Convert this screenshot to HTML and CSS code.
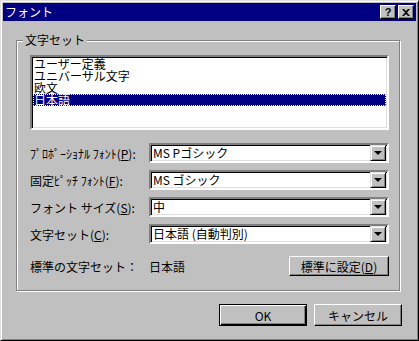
FILE: index.html
```html
<!DOCTYPE html>
<html lang="ja">
<head>
  <meta charset="UTF-8" />
  <title>フォント</title>
  <link rel="stylesheet" href="styles.css">
</head>
<body>
  <div class="window">
    <!-- Title bar -->
    <div class="titlebar">
      <span class="title">フォント</span>
      <span class="tbtn help">?</span>
      <span class="tbtn close">
        <svg width="8" height="7" viewBox="0 0 8 7"><path d="M0 0h2l2 2 2-2h2L5 3.5 8 7H6L4 5 2 7H0l3-3.5z" fill="#000"/></svg>
      </span>
    </div>

    <div class="content">
      <!-- Character set group -->
      <div class="group">
        <span class="group-label">文字セット</span>
        <ul class="listbox">
          <li>ユーザー定義</li>
          <li>ユニバーサル文字</li>
          <li>欧文</li>
          <li class="selected">日本語</li>
        </ul>

        <div class="row">
          <label class="label">ﾌﾟﾛﾎﾟｰｼｮﾅﾙ ﾌｫﾝﾄ(<u>P</u>):</label>
          <div class="combo"><span class="combo-text">MS Pゴシック</span><span class="drop"></span></div>
        </div>
        <div class="row">
          <label class="label">固定ﾋﾟｯﾁ ﾌｫﾝﾄ(<u>F</u>):</label>
          <div class="combo"><span class="combo-text">MS ゴシック</span><span class="drop"></span></div>
        </div>
        <div class="row">
          <label class="label">フォント サイズ(<u>S</u>):</label>
          <div class="combo"><span class="combo-text">中</span><span class="drop"></span></div>
        </div>
        <div class="row">
          <label class="label">文字セット(<u>C</u>):</label>
          <div class="combo"><span class="combo-text">日本語 (自動判別)</span><span class="drop"></span></div>
        </div>

        <div class="row default-row">
          <span class="label">標準の文字セット：</span>
          <span class="value">日本語</span>
          <button class="btn set-default">標準に設定(<u>D</u>)</button>
        </div>
      </div>

      <!-- Dialog buttons -->
      <div class="actions">
        <button class="btn dialog-btn default">OK</button>
        <button class="btn dialog-btn">キャンセル</button>
      </div>
    </div>
  </div>
</body>
</html>
```

FILE: styles.css
```css
body {
  margin: 0;
  padding: 0;
  font-family: "Noto Sans CJK JP", "Noto Sans", sans-serif;
  font-size: 12px;
  color: #000;
}
.window {
  width: 419px;
  height: 341px;
  box-sizing: border-box;
  background: #c0c0c0;
  border: 1px solid;
  border-color: #dfdfdf #000 #000 #dfdfdf;
  box-shadow: inset 1px 1px #fff, inset -1px -1px #808080;
  padding: 2px;
}
.titlebar {
  height: 18px;
  background: #000080;
  color: #fff;
  display: flex;
  align-items: center;
  padding: 0 2px;
}
.title {
  flex: 1;
  line-height: 18px;
}
.tbtn {
  width: 16px;
  height: 14px;
  box-sizing: border-box;
  background: #c0c0c0;
  border: 1px solid;
  border-color: #fff #000 #000 #fff;
  box-shadow: inset -1px -1px #808080;
  color: #000;
  font-family: "Liberation Sans", sans-serif;
  font-weight: bold;
  font-size: 11px;
  line-height: 12px;
  text-align: center;
  display: flex;
  align-items: center;
  justify-content: center;
}
.tbtn.close {
  margin-left: 2px;
}
.content {
  padding: 0 14px 0 13px;
}
.group {
  position: relative;
  margin-top: 19px;
  width: 384px;
  height: 251px;
  box-sizing: border-box;
  border: 1px solid #808080;
  box-shadow: inset 1px 1px #fff, 1px 1px #fff;
  padding: 14px 10px 0 13px;
}
.group-label {
  position: absolute;
  top: -9px;
  left: 6px;
  padding: 0 2px;
  background: #c0c0c0;
  line-height: 16px;
}
.listbox {
  list-style: none;
  margin: 0;
  padding: 1px 0 0;
  height: 75px;
  box-sizing: border-box;
  background: #fff;
  border: 2px solid;
  border-color: #808080 #fff #fff #808080;
  box-shadow: inset 1px 1px #000, inset -1px -1px #dfdfdf;
}
.listbox li {
  height: 12px;
  line-height: 12px;
  padding-left: 1px;
  margin: 0 1px;
}
.listbox li.selected {
  background: #000080;
  color: #fff;
  outline: 1px dotted #ffffa0;
  outline-offset: -1px;
}
.row {
  display: flex;
  align-items: center;
  margin-top: 7px;
}
.listbox + .row {
  margin-top: 13px;
}
.label {
  width: 119px;
  flex-shrink: 0;
  white-space: nowrap;
}
.combo {
  flex: 1;
  height: 20px;
  box-sizing: border-box;
  background: #fff;
  border: 2px solid;
  border-color: #808080 #fff #fff #808080;
  box-shadow: inset 1px 1px #000, inset -1px -1px #dfdfdf;
  display: flex;
  align-items: center;
  padding: 0 1px 0 2px;
}
.combo-text {
  flex: 1;
  line-height: 16px;
}
.drop {
  position: relative;
  width: 16px;
  height: 16px;
  box-sizing: border-box;
  background: #c0c0c0;
  border: 1px solid;
  border-color: #dfdfdf #000 #000 #dfdfdf;
  box-shadow: inset 1px 1px #fff, inset -1px -1px #808080;
}
.drop::after {
  content: "";
  position: absolute;
  left: 3px;
  top: 5px;
  border-left: 4px solid transparent;
  border-right: 4px solid transparent;
  border-top: 4px solid #000;
}
.default-row {
  margin-top: 12px;
}
.value {
  flex: 1;
}
.btn {
  font-family: inherit;
  font-size: 12px;
  color: #000;
  background: #c0c0c0;
  border: 1px solid;
  border-color: #fff #000 #000 #fff;
  box-shadow: inset -1px -1px #808080;
  padding: 0;
  margin: 0;
  cursor: pointer;
}
.set-default {
  width: 100px;
  height: 20px;
}
.actions {
  display: flex;
  justify-content: flex-end;
  gap: 7px;
  margin-top: 13px;
}
.dialog-btn {
  width: 88px;
  height: 22px;
}
.dialog-btn.default {
  border: 1px solid #000;
  box-shadow: inset 1px 1px #fff, inset -1px -1px #000, inset -2px -2px #808080;
}
```
